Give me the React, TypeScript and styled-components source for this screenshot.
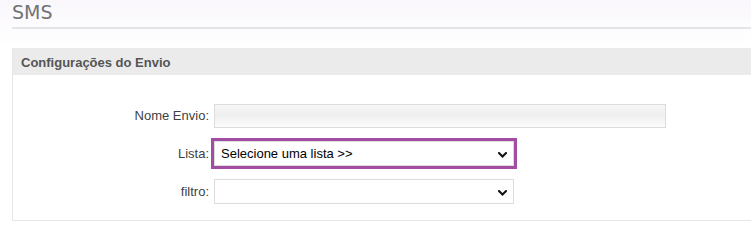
import styled, { createGlobalStyle, css } from "styled-components";

const GlobalStyle = createGlobalStyle`
    html, body {
        margin: 0;
        padding: 0;
        background: #fff;
        overflow: hidden;
    }
    body {
        font-family: "Liberation Sans", Arial, sans-serif;
    }
`;

const App = () => {
    return (
        <Page>
            <GlobalStyle />
            <Title>SMS</Title>
            {/* configuracoes */}
            <Panel>
                <PanelHeader>Configurações do Envio</PanelHeader>
                <PanelBody>
                    <Row>
                        <Label htmlFor="nome">Nome Envio:</Label>
                        <TextInput id="nome" type="text" />
                    </Row>
                    <Row>
                        <Label htmlFor="lista">Lista:</Label>
                        <SelectWrap>
                            <Select id="lista" $highlighted defaultValue="">
                                <option value="">Selecione uma lista &gt;&gt;</option>
                            </Select>
                            <Chevron />
                        </SelectWrap>
                    </Row>
                    <Row>
                        <Label htmlFor="filtro">filtro:</Label>
                        <SelectWrap>
                            <Select id="filtro" defaultValue="">
                                <option value=""></option>
                            </Select>
                            <Chevron />
                        </SelectWrap>
                    </Row>
                </PanelBody>
            </Panel>
        </Page>
    );
};

const Chevron = () => (
    <ChevronIcon width="9" height="6" viewBox="0 0 9 6">
        <path d="M1 1 L4.5 4.5 L8 1" fill="none" stroke="#111" strokeWidth="2" strokeLinecap="square" />
    </ChevronIcon>
);

export default App;

const Page = styled.div`
    padding: 0 0 0 12px;
    background: linear-gradient(to bottom, #f9f7fb 0px, #fdfcfe 30px, #fff 46px);
`;

const Title = styled.h1`
    margin: 0;
    padding: 1px 0 4px;
    font-family: "DejaVu Sans", Verdana, sans-serif;
    font-size: 19px;
    font-weight: normal;
    line-height: 22px;
    color: #737373;
    border-bottom: 2px solid #e4e4e4;
`;

const Panel = styled.section`
    margin-top: 19px;
    border: 1px solid #e6e6e6;
    border-top: none;
    border-right: none;
`;

const PanelHeader = styled.h2`
    margin: 0;
    height: 27px;
    padding: 0 0 0 8px;
    background: #ebebeb;
    font-size: 13px;
    font-weight: bold;
    line-height: 29px;
    color: #555;
`;

const PanelBody = styled.div`
    display: flex;
    flex-direction: column;
    gap: 13px;
    padding: 28px 0 16px;
`;

const Row = styled.div`
    display: grid;
    grid-template-columns: 196px auto;
    column-gap: 5px;
    align-items: center;
    justify-content: start;
    height: 25px;
`;

const Label = styled.label`
    text-align: right;
    font-size: 13px;
    color: #3f3f3f;
`;

const fieldBase = css`
    box-sizing: border-box;
    height: 25px;
    margin: 0;
    border: 1px solid #dcdcdc;
    border-radius: 0;
    font-family: "Liberation Sans", Arial, sans-serif;
    font-size: 13px;
    color: #000;
    outline: none;
`;

const TextInput = styled.input`
    ${fieldBase}
    width: 452px;
    height: 24px;
    padding: 0 6px;
    background: linear-gradient(to bottom, #f6f6f6 0%, #efefef 45%, #fbfbfb 100%);
`;

const SelectWrap = styled.div`
    position: relative;
    width: 300px;
`;

const Select = styled.select<{ $highlighted?: boolean }>`
    ${fieldBase}
    display: block;
    width: 300px;
    padding: 0 24px 0 6px;
    appearance: none;
    background: #fff;
    ${({ $highlighted }) => $highlighted && css`
        outline: 3px solid #a34ca3;
        outline-offset: 0;
    `}
`;

const ChevronIcon = styled.svg`
    position: absolute;
    right: 7px;
    top: 50%;
    margin-top: -2px;
    pointer-events: none;
`;
